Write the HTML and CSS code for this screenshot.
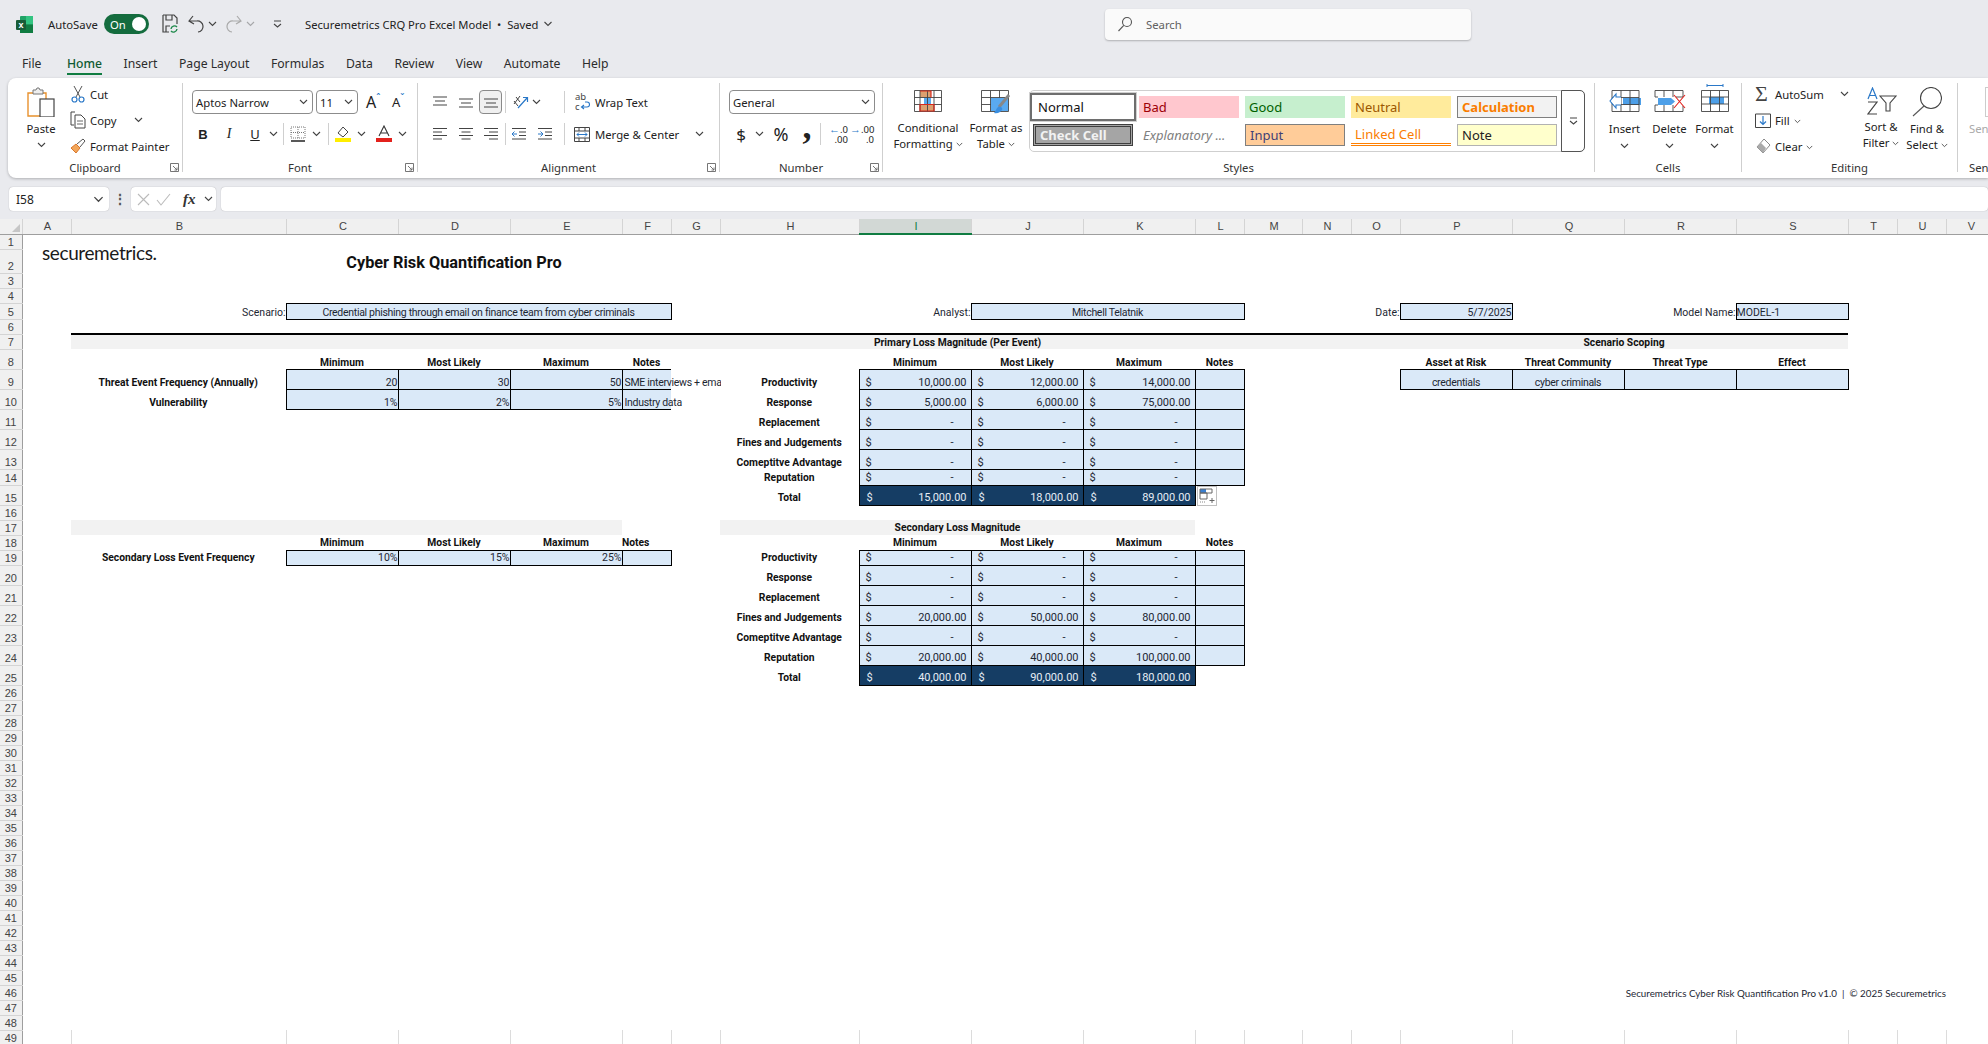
FILE: index.html
```html
<!DOCTYPE html>
<html lang="en">
<head>
  <meta charset="UTF-8" />
  <title>Securemetrics CRQ Pro Excel Model</title>
  <link rel="stylesheet" href="styles.css">
</head>
<body>
  <svg class="sprite">
    <symbol id="chev" viewBox="0 0 9 6"><path d="M1 1l3.5 3.5L8 1" fill="none" stroke="#444" stroke-width="1.1"/></symbol>
    <symbol id="launch" viewBox="0 0 9 9"><path d="M.5 8.5V.5h8v8zM3 3l4 4M7 4.5V7H4.5" fill="none" stroke="#666" stroke-width=".9"/></symbol>
    <symbol id="lines-l" viewBox="0 0 16 14"><path d="M1 1.5h14M1 5h9M1 8.5h14M1 12h9" stroke="#444" stroke-width="1.1"/></symbol>
    <symbol id="lines-c" viewBox="0 0 16 14"><path d="M1 1.5h14M3.5 5h9M1 8.5h14M3.5 12h9" stroke="#444" stroke-width="1.1"/></symbol>
    <symbol id="lines-r" viewBox="0 0 16 14"><path d="M1 1.5h14M6 5h9M1 8.5h14M6 12h9" stroke="#444" stroke-width="1.1"/></symbol>
  </svg>

  <header class="titlebar">
    <svg class="xl-logo" width="17" height="17" viewBox="0 0 17 17">
      <rect x="4" y="0" width="13" height="17" rx="1" fill="#21a366"/>
      <rect x="10" y="0" width="7" height="8.5" fill="#33c481"/>
      <rect x="4" y="8.5" width="13" height="8.5" fill="#107c41"/>
      <rect x="0" y="4" width="10" height="10" rx="1" fill="#185c37"/>
      <text x="5" y="12" class="xl-x">x</text>
    </svg>
    <span class="autosave">AutoSave</span>
    <span class="toggle"><span>On</span><i></i></span>
    <svg class="save-ic" width="16" height="20" viewBox="0 0 16 20">
      <path d="M1 1h11l3 3v6M7 18H1V1M4 1v5h6V1M4 18v-6h4" fill="none" stroke="#444" stroke-width="1.2"/>
      <path d="M9 15a3.5 3.5 0 0 1 6-2M15 15a3.5 3.5 0 0 1-6 2" fill="none" stroke="#1f8a4c" stroke-width="1.4"/>
    </svg>
    <svg class="undo" width="16" height="18" viewBox="0 0 16 18"><path d="M5 1L1 6l5 3M1.500 6H9a5.500 5.500 0 0 1 1 11" fill="none" stroke="#444" stroke-width="1.2"/></svg>
    <svg class="tchev" width="9" height="6"><use href="#chev"/></svg>
    <svg class="redo" width="16" height="18" viewBox="0 0 16 18"><path d="M11 1l4 5-5 3M14.500 6H7a5.500 5.500 0 0 0-1 11" fill="none" stroke="#aaa" stroke-width="1.2"/></svg>
    <svg class="tchev dim" width="9" height="6"><use href="#chev"/></svg>
    <svg class="qat" width="9" height="8" viewBox="0 0 9 8"><path d="M1 1h7M1 4l3.5 3L8 4" fill="none" stroke="#444" stroke-width="1.1"/></svg>
    <span class="docname">Securemetrics CRQ Pro Excel Model &nbsp;•&nbsp; Saved</span>
    <svg class="docchev" width="10" height="6"><use href="#chev"/></svg>
    <div class="search">
      <svg width="16" height="16" viewBox="0 0 16 16"><circle cx="10" cy="6" r="4.5" fill="none" stroke="#555" stroke-width="1.1"/><path d="M6.800 9.400L1.500 15" stroke="#555" stroke-width="1.1"/></svg>
      <span>Search</span>
    </div>
  </header>

  <nav class="tabs">
    <a class="file">File</a><a class="active">Home</a><a>Insert</a><a>Page Layout</a><a>Formulas</a><a>Data</a><a>Review</a><a>View</a><a>Automate</a><a>Help</a>
  </nav>

  <section class="ribbon">
    <!-- Clipboard -->
    <div class="group g-clip">
      <div class="g-body">
        <div class="paste">
          <svg width="28" height="30" viewBox="0 0 28 30">
            <path d="M1 6h18v23H1z" fill="#fff" stroke="#e8912d" stroke-width="1.4"/>
            <path d="M6 6V3h3l1-2 2 0 1 2h3v4H6z" fill="#eee" stroke="#777"/>
            <rect x="13" y="12" width="14" height="18" fill="#fff" stroke="#444" stroke-width="1.2"/>
          </svg>
          <span>Paste</span>
          <svg class="big-chev" width="9" height="6"><use href="#chev"/></svg>
        </div>
        <div class="small-col">
          <div class="small-row"><svg width="14" height="18" viewBox="0 0 14 18"><path d="M3 1l6 11M11 1L5 12" stroke="#555" fill="none"/><circle cx="3.5" cy="14.5" r="2.5" fill="none" stroke="#2a78c8" stroke-width="1.2"/><circle cx="10.5" cy="14.5" r="2.5" fill="none" stroke="#2a78c8" stroke-width="1.2"/></svg><span>Cut</span></div>
          <div class="small-row"><svg width="16" height="18" viewBox="0 0 16 18"><path d="M5 1H1v13h3M5 4h6l4 4v9H5z" fill="none" stroke="#444"/><path d="M7 10h6M7 13h6" stroke="#666"/></svg><span>Copy</span><svg class="copy-chev" width="9" height="6"><use href="#chev"/></svg></div>
          <div class="small-row"><svg width="16" height="16" viewBox="0 0 16 16"><path d="M1 10l5-4 4 4-4 5z" fill="#f2a65a" stroke="#d9762a"/><path d="M7 6l6-5 2 2-5 6" fill="#fff" stroke="#555"/></svg><span>Format Painter</span></div>
        </div>
      </div>
      <div class="g-label">Clipboard</div>
      <svg class="launcher" width="9" height="9"><use href="#launch"/></svg>
    </div>

    <!-- Font -->
    <div class="group g-font">
      <div class="g-body g-col">
        <div class="tool-row first">
          <div class="select font-name"><span>Aptos Narrow</span><svg width="9" height="6"><use href="#chev"/></svg></div>
          <div class="select font-size"><span>11</span><svg width="9" height="6"><use href="#chev"/></svg></div>
          <span class="grow-a">A<sup>ˆ</sup></span>
          <span class="shrink-a">A<sup>ˇ</sup></span>
        </div>
        <div class="tool-row">
          <span class="ib b">B</span><span class="ib i">I</span><span class="ib u">U</span>
          <svg class="cv" width="9" height="6"><use href="#chev"/></svg>
          <i class="vsep ml5"></i>
          <svg class="ml6" width="16" height="16" viewBox="0 0 16 16"><path d="M1 1h14v11H1zM8 1v11M1 6.500h14" fill="none" stroke="#777" stroke-dasharray="1 1"/><path d="M1 15h14" stroke="#222" stroke-width="1.4"/></svg>
          <svg class="cv ml6" width="9" height="6"><use href="#chev"/></svg>
          <i class="vsep ml7"></i>
          <svg class="ml6" width="16" height="18" viewBox="0 0 16 18"><path d="M3 8l5-6 5 5-5 5z" fill="#fff" stroke="#444"/><rect y="13" width="16" height="4" fill="#ffee00"/></svg>
          <svg class="cv ml6" width="9" height="6"><use href="#chev"/></svg>
          <svg class="ml10" width="16" height="18" viewBox="0 0 16 18"><path d="M3 11L8 1l5 10M5 8h6" fill="none" stroke="#333" stroke-width="1.1"/><rect y="13" width="16" height="4" fill="#e3211c"/></svg>
          <svg class="cv ml6" width="9" height="6"><use href="#chev"/></svg>
        </div>
      </div>
      <div class="g-label">Font</div>
      <svg class="launcher" width="9" height="9"><use href="#launch"/></svg>
    </div>

    <!-- Alignment -->
    <div class="group g-align">
      <div class="g-body g-col">
        <div class="tool-row first">
          <span class="ib ml9"><svg width="16" height="12" viewBox="0 0 16 12"><path d="M1 1h14M3 5h10M1 9h14" stroke="#444" stroke-width="1.1"/></svg></span>
          <span class="ib"><svg width="16" height="12" viewBox="0 0 16 12"><path d="M1 3h14M3 7h10M1 11h14" stroke="#444" stroke-width="1.1"/></svg></span>
          <span class="ib on"><svg width="16" height="12" viewBox="0 0 16 12"><path d="M1 3h14M3 7h10M1 11h14" stroke="#444" stroke-width="1.1"/></svg></span>
          <i class="vsep ml3"></i>
          <span class="ib ml3 w22"><svg width="17" height="16" viewBox="0 0 17 16"><path d="M2 10L8 2M4 3l4 5M2 7l4 5" stroke="#444" fill="none"/><path d="M6 14L15 4M11 3.500h4.500V8" stroke="#2a78c8" fill="none" stroke-width="1.2"/></svg></span>
          <svg class="cv" width="9" height="6"><use href="#chev"/></svg>
          <i class="vsep ml23"></i>
          <svg class="ml9" width="17" height="22" viewBox="0 0 17 22">
            <text x="1" y="9" class="wrap-t">ab</text><text x="1" y="19" class="wrap-t">c</text>
            <path d="M8 16h5a2.500 2.500 0 0 0 0-5h-2M10 14l-2.500 2 2.500 2" fill="none" stroke="#2a78c8" stroke-width="1.1"/>
          </svg>
          <span class="tool-text ml4">Wrap Text</span>
        </div>
        <div class="tool-row">
          <span class="ib ml9"><svg width="16" height="14"><use href="#lines-l"/></svg></span>
          <span class="ib"><svg width="16" height="14"><use href="#lines-c"/></svg></span>
          <span class="ib w24"><svg width="16" height="14"><use href="#lines-r"/></svg></span>
          <i class="vsep ml2"></i>
          <span class="ib"><svg width="16" height="14" viewBox="0 0 16 14"><path d="M1 1.500h14M8 5h7M8 8.500h7M1 12h14" stroke="#444"/><path d="M6 7H1M3.500 4.500L1 7l2.500 2.500" stroke="#2a78c8" fill="none"/></svg></span>
          <span class="ib"><svg width="16" height="14" viewBox="0 0 16 14"><path d="M1 1.500h14M8 5h7M8 8.500h7M1 12h14" stroke="#444"/><path d="M1 7h5M3.500 4.500L6 7 3.500 9.500" stroke="#2a78c8" fill="none"/></svg></span>
          <i class="vsep ml6"></i>
          <svg class="ml9" width="16" height="15" viewBox="0 0 16 15"><path d="M.5.500h15v14H.5zM.5 4h15M.5 11h15M5 .500V4M11 .500V4M5 11v3.500M11 11v3.500" fill="none" stroke="#444"/><path d="M3 7.500h10M5 5.500l-2 2 2 2M11 5.500l2 2-2 2" fill="none" stroke="#2a78c8"/></svg>
          <span class="tool-text ml5">Merge &amp; Center</span>
          <svg class="cv ml16" width="9" height="6"><use href="#chev"/></svg>
        </div>
      </div>
      <div class="g-label">Alignment</div>
      <svg class="launcher" width="9" height="9"><use href="#launch"/></svg>
    </div>

    <!-- Number -->
    <div class="group g-num">
      <div class="g-body g-col">
        <div class="tool-row first">
          <div class="select num-format"><span>General</span><svg width="9" height="6"><use href="#chev"/></svg></div>
        </div>
        <div class="tool-row">
          <span class="ib sym ml8">$</span>
          <svg class="cv" width="9" height="6"><use href="#chev"/></svg>
          <span class="ib sym pct ml4">%</span>
          <span class="ib sym comma">,</span>
          <i class="vsep"></i>
          <span class="ib dec ml3"><b>←</b>.0<br>.00</span>
          <span class="ib dec"><b>→</b>.00<br>.0</span>
        </div>
      </div>
      <div class="g-label">Number</div>
      <svg class="launcher" width="9" height="9"><use href="#launch"/></svg>
    </div>

    <!-- Styles -->
    <div class="group g-styles">
      <div class="g-body">
        <div class="big-btn w78 ml6">
          <svg width="28" height="22" viewBox="0 0 28 22">
            <rect x="6" y="1" width="11" height="6.500" fill="#dca070"/><rect x="10" y="8" width="7" height="6" fill="#5aaaf0"/><rect x="6" y="14.500" width="14" height="6.500" fill="#dca070"/>
            <path d="M.5.500h27v21H.5zM6 .500v21M13.500.500v21M20 .500v21M.5 7.500h27M.5 14.500h27" fill="none" stroke="#444" stroke-width=".9"/>
            <path d="M6 1h11v6.500H17M6 14.500h14V21H6z" fill="none" stroke="#d8281c" stroke-width="1.2"/>
          </svg>
          <span class="lbl">Conditional<br>Formatting <svg width="7" height="5"><use href="#chev"/></svg></span>
        </div>
        <div class="big-btn w58">
          <svg width="30" height="24" viewBox="0 0 30 24">
            <path d="M.5.500h27v21H.5zM9.500.500v21M18.500.500v21M.5 7.500h27M.5 14.500h27" fill="none" stroke="#444" stroke-width=".9"/>
            <rect x="10" y="8" width="17" height="13" fill="#5aaaf0"/>
            <path d="M28 5L18 17" stroke="#888" stroke-width="3"/><path d="M15 20q2-5 5-3t-1 5q-3 2-6 1" fill="#3a8ee0"/>
          </svg>
          <span class="lbl tight">Format as<br>Table <svg width="7" height="5"><use href="#chev"/></svg></span>
        </div>
        <div class="gallery">
          <div class="style-grid">
            <span class="st st-normal">Normal</span>
            <span class="st st-bad">Bad</span>
            <span class="st st-good">Good</span>
            <span class="st st-neutral">Neutral</span>
            <span class="st st-calc">Calculation</span>
            <span class="st st-check">Check Cell</span>
            <span class="st st-expl">Explanatory ...</span>
            <span class="st st-input">Input</span>
            <span class="st st-linked">Linked Cell</span>
            <span class="st st-note">Note</span>
          </div>
          <div class="more"><svg width="9" height="8" viewBox="0 0 9 8"><path d="M1 1h7M1 4l3.5 3L8 4" fill="none" stroke="#444" stroke-width="1.1"/></svg></div>
        </div>
      </div>
      <div class="g-label">Styles</div>
    </div>

    <!-- Cells -->
    <div class="group g-cells">
      <div class="g-body">
        <div class="big-btn w45 pl7box">
          <svg width="32" height="22" viewBox="0 0 32 22">
            <rect x="14" y="8" width="18" height="7" fill="#4d9fe8"/>
            <path d="M3 .500h27v21H3zM12 .500v21M21 .500v21M3 7.500h27M3 14.500h27" fill="none" stroke="#444" stroke-width=".9"/>
            <path d="M12 7H7V4L1 11l6 7v-3h5" fill="#fff" stroke="#2a78c8" stroke-width="1.1"/>
          </svg>
          <span class="lbl low">Insert</span><svg class="big-chev" width="9" height="6"><use href="#chev"/></svg>
        </div>
        <div class="big-btn w45">
          <svg width="32" height="22" viewBox="0 0 32 22">
            <rect x="4" y="8" width="13" height="7" fill="#4d9fe8"/><path d="M17 8l4 3.500-4 3.500z" fill="#4d9fe8"/>
            <path d="M22 7h7V.500H1V7h3M4 15H1v6.500h28V16M10 .500V7M19 .500V7M10 15v6.500M19 15v6.500" fill="none" stroke="#444" stroke-width=".9"/>
            <path d="M20 5l11 13M31 5L20 18" stroke="#e3211c" stroke-width="1.1"/>
          </svg>
          <span class="lbl low">Delete</span><svg class="big-chev" width="9" height="6"><use href="#chev"/></svg>
        </div>
        <div class="big-btn w45 up">
          <svg width="28" height="28" viewBox="0 0 28 28">
            <path d="M6 1.500h16M6 0v3M22 0v3" stroke="#2a78c8" fill="none"/>
            <rect x="8" y="13" width="15" height="7" fill="#4d9fe8"/>
            <path d="M.5 6.500h27v21H.5zM9.500 6.500v21M18.500 6.500v21M.5 13h27M.5 20h27" fill="none" stroke="#444" stroke-width=".9"/>
          </svg>
          <span class="lbl low">Format</span><svg class="big-chev" width="9" height="6"><use href="#chev"/></svg>
        </div>
      </div>
      <div class="g-label">Cells</div>
    </div>

    <!-- Editing -->
    <div class="group g-edit">
      <div class="g-body">
        <div class="small-col edit-col">
          <div class="small-row"><span class="sigma">Σ</span><span>AutoSum</span><svg class="auto-chev" width="9" height="6"><use href="#chev"/></svg></div>
          <div class="small-row"><svg width="16" height="16" viewBox="0 0 16 16"><path d="M.5 2h15v13.500H.5z" fill="none" stroke="#444"/><path d="M8 4v8M5 9.500L8 12.500l3-3" fill="none" stroke="#2a78c8" stroke-width="1.2"/></svg><span>Fill <svg width="7" height="5"><use href="#chev"/></svg></span></div>
          <div class="small-row"><svg width="16" height="16" viewBox="0 0 16 16"><path d="M9 1l6 6-7 8-6-6z" fill="#fff" stroke="#888"/><path d="M2 9l4-4 5 5-3 5z" fill="#aaa"/></svg><span>Clear <svg width="7" height="5"><use href="#chev"/></svg></span></div>
        </div>
        <div class="big-btn w46">
          <svg width="31" height="28" viewBox="0 0 31 28">
            <path d="M2 12L6.500 1 11 12M3.500 8.500h6" fill="none" stroke="#2a78c8" stroke-width="1.2"/>
            <path d="M2 15h9L2 27h9" fill="none" stroke="#444" stroke-width="1.2"/>
            <path d="M14 9h16l-6 7v8h-4v-8z" fill="#fff" stroke="#444" stroke-width="1.1"/>
          </svg>
          <span class="lbl">Sort &amp;<br>Filter <svg width="7" height="5"><use href="#chev"/></svg></span>
        </div>
        <div class="big-btn w46">
          <svg width="30" height="30" viewBox="0 0 30 30">
            <circle cx="19" cy="11" r="10.500" fill="none" stroke="#444" stroke-width="1.1"/><path d="M12 19L1 29" stroke="#555" stroke-width="1.1"/>
          </svg>
          <span class="lbl">Find &amp;<br>Select <svg width="7" height="5"><use href="#chev"/></svg></span>
        </div>
      </div>
      <div class="g-label">Editing</div>
    </div>

    <!-- cut off at the window edge -->
    <div class="group g-sens">
      <div class="g-body">
        <div class="sens-btn"><i></i><span>Sen</span></div>
      </div>
      <div class="g-label left">Sen</div>
    </div>
  </section>

  <div class="formula-bar">
    <div class="name-box"><span>I58</span><svg width="11" height="7"><use href="#chev"/></svg></div>
    <span class="dots">⋮</span>
    <div class="fx-box">
      <svg width="13" height="13" viewBox="0 0 13 13"><path d="M1 1l11 11M12 1L1 12" stroke="#bbb" stroke-width="1.1"/></svg>
      <svg width="15" height="13" viewBox="0 0 15 13"><path d="M1 7l4 5 9-11" fill="none" stroke="#bbb" stroke-width="1.1"/></svg>
      <span class="fx">fx</span>
      <svg width="9" height="6"><use href="#chev"/></svg>
    </div>
    <div class="formula-input"></div>
  </div>

  <div class="sheet-wrap">
    <span class="logo">securemetrics.</span>
    <div class="paste-opts">
      <svg width="17" height="16" viewBox="0 0 17 16"><rect x="1" y="1" width="6" height="4" fill="#3a7fd0"/><path d="M1 1h12v4H1zM1 5h7v6H1z" fill="none" stroke="#666"/><path d="M1 14h6" stroke="#888" stroke-dasharray="1 1"/><path d="M13 10v5M10.500 12.500h5" stroke="#666"/></svg>
    </div>
    <table class="sheet">
      <colgroup>
        <col class="c-rh"><col class="c-s"><col class="c-b"><col class="c-m"><col class="c-m"><col class="c-m"><col class="c-s"><col class="c-s">
        <col class="c-h"><col class="c-m"><col class="c-m"><col class="c-m"><col class="c-s"><col class="c-mm"><col class="c-s"><col class="c-s">
        <col class="c-m"><col class="c-m"><col class="c-m"><col class="c-m"><col class="c-s"><col class="c-s"><col class="c-s">
      </colgroup>
      <thead>
        <tr class="colhead">
          <th class="corner"><i></i></th>
          <th>A</th><th>B</th><th>C</th><th>D</th><th>E</th><th>F</th><th>G</th><th>H</th>
          <th class="sel">I</th>
          <th>J</th><th>K</th><th>L</th><th>M</th><th>N</th><th>O</th><th>P</th><th>Q</th><th>R</th><th>S</th><th>T</th><th>U</th><th>V</th>
        </tr>
      </thead>
      <tbody>
        <tr class="r15"><th>1</th><td colspan="22"></td></tr>
        <tr class="r24"><th>2</th><td colspan="2"></td><td colspan="3" class="title">Cyber Risk Quantification Pro</td><td colspan="17"></td></tr>
        <tr class="r15"><th>3</th><td colspan="22"></td></tr>
        <tr class="r15"><th>4</th><td colspan="22"></td></tr>
        <tr class="r16 pb0">
          <th>5</th><td></td><td class="lab-r">Scenario:</td>
          <td colspan="4" class="box ctr">Credential phishing through email on finance team from cyber criminals</td>
          <td colspan="2"></td><td class="lab-r">Analyst:</td>
          <td colspan="3" class="box ctr">Mitchell Telatnik</td>
          <td colspan="2"></td><td class="lab-r">Date:</td>
          <td class="box rgt">5/7/2025</td><td></td><td class="lab-r">Model Name:</td>
          <td class="box lft">MODEL-1</td><td colspan="3"></td>
        </tr>
        <tr class="r15"><th>6</th><td></td><td colspan="18" class="rule"></td><td colspan="3"></td></tr>
        <tr class="r15 pb0">
          <th>7</th><td></td>
          <td colspan="6" class="band"></td>
          <td colspan="4" class="band hd">Primary Loss Magnitude (Per Event)</td>
          <td colspan="4" class="band"></td>
          <td colspan="4" class="band hd">Scenario Scoping</td>
          <td colspan="3"></td>
        </tr>
        <tr class="r20 pb0">
          <th>8</th><td colspan="2"></td>
          <td class="hd">Minimum</td><td class="hd">Most Likely</td><td class="hd">Maximum</td><td class="hd">Notes</td>
          <td colspan="2"></td>
          <td class="hd">Minimum</td><td class="hd">Most Likely</td><td class="hd">Maximum</td><td class="hd">Notes</td>
          <td colspan="3"></td>
          <td class="hd">Asset at Risk</td><td class="hd">Threat Community</td><td class="hd">Threat Type</td><td class="hd">Effect</td>
          <td colspan="3"></td>
        </tr>
        <tr class="r20 pb0">
          <th>9</th><td></td><td class="hd">Threat Event Frequency (Annually)</td>
          <td class="box rgt">20</td><td class="box rgt">30</td><td class="box rgt">50</td>
          <td class="box open"><span class="spill">SME interviews + email data</span></td>
          <td></td><td class="hd">Productivity</td>
          <td class="box"><div class="m"><span>$</span><span>10,000.00</span></div></td>
          <td class="box"><div class="m"><span>$</span><span>12,000.00</span></div></td>
          <td class="box"><div class="m"><span>$</span><span>14,000.00</span></div></td>
          <td class="box"></td><td colspan="3"></td>
          <td class="box ctr">credentials</td><td class="box ctr">cyber criminals</td><td class="box"></td><td class="box"></td>
          <td colspan="3"></td>
        </tr>
        <tr class="r20 pb0">
          <th>10</th><td></td><td class="hd">Vulnerability</td>
          <td class="box rgt">1%</td><td class="box rgt">2%</td><td class="box rgt">5%</td>
          <td class="box open"><span class="spill">Industry data</span></td>
          <td></td><td class="hd">Response</td>
          <td class="box"><div class="m"><span>$</span><span>5,000.00</span></div></td>
          <td class="box"><div class="m"><span>$</span><span>6,000.00</span></div></td>
          <td class="box"><div class="m"><span>$</span><span>75,000.00</span></div></td>
          <td class="box"></td><td colspan="10"></td>
        </tr>
        <tr class="r20 pb0">
          <th>11</th><td colspan="7"></td><td class="hd">Replacement</td>
          <td class="box"><div class="m"><span>$</span><span class="dash">-</span></div></td>
          <td class="box"><div class="m"><span>$</span><span class="dash">-</span></div></td>
          <td class="box"><div class="m"><span>$</span><span class="dash">-</span></div></td>
          <td class="box"></td><td colspan="10"></td>
        </tr>
        <tr class="r20 pb0">
          <th>12</th><td colspan="7"></td><td class="hd">Fines and Judgements</td>
          <td class="box"><div class="m"><span>$</span><span class="dash">-</span></div></td>
          <td class="box"><div class="m"><span>$</span><span class="dash">-</span></div></td>
          <td class="box"><div class="m"><span>$</span><span class="dash">-</span></div></td>
          <td class="box"></td><td colspan="10"></td>
        </tr>
        <tr class="r20 pb0">
          <th>13</th><td colspan="7"></td><td class="hd">Comeptitve Advantage</td>
          <td class="box"><div class="m"><span>$</span><span class="dash">-</span></div></td>
          <td class="box"><div class="m"><span>$</span><span class="dash">-</span></div></td>
          <td class="box"><div class="m"><span>$</span><span class="dash">-</span></div></td>
          <td class="box"></td><td colspan="10"></td>
        </tr>
        <tr class="r16">
          <th>14</th><td colspan="7"></td><td class="hd">Reputation</td>
          <td class="box"><div class="m"><span>$</span><span class="dash">-</span></div></td>
          <td class="box"><div class="m"><span>$</span><span class="dash">-</span></div></td>
          <td class="box"><div class="m"><span>$</span><span class="dash">-</span></div></td>
          <td class="box"></td><td colspan="10"></td>
        </tr>
        <tr class="r20">
          <th>15</th><td colspan="7"></td><td class="hd">Total</td>
          <td class="total"><div class="m"><span>$</span><span>15,000.00</span></div></td>
          <td class="total"><div class="m"><span>$</span><span>18,000.00</span></div></td>
          <td class="total"><div class="m"><span>$</span><span>89,000.00</span></div></td>
          <td colspan="11"></td>
        </tr>
        <tr class="r15"><th>16</th><td colspan="22"></td></tr>
        <tr class="r15">
          <th>17</th><td></td>
          <td colspan="4" class="band"></td><td colspan="2"></td>
          <td colspan="4" class="band hd">Secondary Loss Magnitude</td>
          <td colspan="11"></td>
        </tr>
        <tr class="r15">
          <th>18</th><td colspan="2"></td>
          <td class="hd">Minimum</td><td class="hd">Most Likely</td><td class="hd">Maximum</td><td class="hd notes-l">Notes</td>
          <td colspan="2"></td>
          <td class="hd">Minimum</td><td class="hd">Most Likely</td><td class="hd">Maximum</td><td class="hd">Notes</td>
          <td colspan="10"></td>
        </tr>
        <tr class="r15">
          <th>19</th><td></td><td class="hd">Secondary Loss Event Frequency</td>
          <td class="box rgt">10%</td><td class="box rgt">15%</td><td class="box rgt">25%</td><td class="box"></td>
          <td></td><td class="hd">Productivity</td>
          <td class="box"><div class="m"><span>$</span><span class="dash">-</span></div></td>
          <td class="box"><div class="m"><span>$</span><span class="dash">-</span></div></td>
          <td class="box"><div class="m"><span>$</span><span class="dash">-</span></div></td>
          <td class="box"></td><td colspan="10"></td>
        </tr>
        <tr class="r20">
          <th>20</th><td colspan="7"></td><td class="hd">Response</td>
          <td class="box"><div class="m"><span>$</span><span class="dash">-</span></div></td>
          <td class="box"><div class="m"><span>$</span><span class="dash">-</span></div></td>
          <td class="box"><div class="m"><span>$</span><span class="dash">-</span></div></td>
          <td class="box"></td><td colspan="10"></td>
        </tr>
        <tr class="r20">
          <th>21</th><td colspan="7"></td><td class="hd">Replacement</td>
          <td class="box"><div class="m"><span>$</span><span class="dash">-</span></div></td>
          <td class="box"><div class="m"><span>$</span><span class="dash">-</span></div></td>
          <td class="box"><div class="m"><span>$</span><span class="dash">-</span></div></td>
          <td class="box"></td><td colspan="10"></td>
        </tr>
        <tr class="r20">
          <th>22</th><td colspan="7"></td><td class="hd">Fines and Judgements</td>
          <td class="box"><div class="m"><span>$</span><span>20,000.00</span></div></td>
          <td class="box"><div class="m"><span>$</span><span>50,000.00</span></div></td>
          <td class="box"><div class="m"><span>$</span><span>80,000.00</span></div></td>
          <td class="box"></td><td colspan="10"></td>
        </tr>
        <tr class="r20">
          <th>23</th><td colspan="7"></td><td class="hd">Comeptitve Advantage</td>
          <td class="box"><div class="m"><span>$</span><span class="dash">-</span></div></td>
          <td class="box"><div class="m"><span>$</span><span class="dash">-</span></div></td>
          <td class="box"><div class="m"><span>$</span><span class="dash">-</span></div></td>
          <td class="box"></td><td colspan="10"></td>
        </tr>
        <tr class="r20">
          <th>24</th><td colspan="7"></td><td class="hd">Reputation</td>
          <td class="box"><div class="m"><span>$</span><span>20,000.00</span></div></td>
          <td class="box"><div class="m"><span>$</span><span>40,000.00</span></div></td>
          <td class="box"><div class="m"><span>$</span><span>100,000.00</span></div></td>
          <td class="box"></td><td colspan="10"></td>
        </tr>
        <tr class="r20">
          <th>25</th><td colspan="7"></td><td class="hd">Total</td>
          <td class="total"><div class="m"><span>$</span><span>40,000.00</span></div></td>
          <td class="total"><div class="m"><span>$</span><span>90,000.00</span></div></td>
          <td class="total"><div class="m"><span>$</span><span>180,000.00</span></div></td>
          <td colspan="11"></td>
        </tr>
        <tr class="r15"><th>26</th><td colspan="22"></td></tr>
        <tr class="r15"><th>27</th><td colspan="22"></td></tr>
        <tr class="r15"><th>28</th><td colspan="22"></td></tr>
        <tr class="r15"><th>29</th><td colspan="22"></td></tr>
        <tr class="r15"><th>30</th><td colspan="22"></td></tr>
        <tr class="r15"><th>31</th><td colspan="22"></td></tr>
        <tr class="r15"><th>32</th><td colspan="22"></td></tr>
        <tr class="r15"><th>33</th><td colspan="22"></td></tr>
        <tr class="r15"><th>34</th><td colspan="22"></td></tr>
        <tr class="r15"><th>35</th><td colspan="22"></td></tr>
        <tr class="r15"><th>36</th><td colspan="22"></td></tr>
        <tr class="r15"><th>37</th><td colspan="22"></td></tr>
        <tr class="r15"><th>38</th><td colspan="22"></td></tr>
        <tr class="r15"><th>39</th><td colspan="22"></td></tr>
        <tr class="r15"><th>40</th><td colspan="22"></td></tr>
        <tr class="r15"><th>41</th><td colspan="22"></td></tr>
        <tr class="r15"><th>42</th><td colspan="22"></td></tr>
        <tr class="r15"><th>43</th><td colspan="22"></td></tr>
        <tr class="r15"><th>44</th><td colspan="22"></td></tr>
        <tr class="r15"><th>45</th><td colspan="22"></td></tr>
        <tr class="r15"><th>46</th><td colspan="15"></td><td colspan="6" class="foot">Securemetrics Cyber Risk Quantification Pro v1.0 &nbsp;|&nbsp; © 2025 Securemetrics</td><td></td></tr>
        <tr class="r15"><th>47</th><td colspan="22"></td></tr>
        <tr class="r15"><th>48</th><td colspan="22"></td></tr>
        <tr class="r15 gridded"><th>49</th><td></td><td></td><td></td><td></td><td></td><td></td><td></td><td></td><td></td><td></td><td></td><td></td><td></td><td></td><td></td><td></td><td></td><td></td><td></td><td></td><td></td><td></td></tr>
      </tbody>
    </table>
  </div>
</body>
</html>
```

FILE: styles.css
```css
html, body {
  margin: 0;
  height: 1044px;
  overflow: hidden;
  background-color: #e9eaee;
  color: #222;
  font-family: "Noto Sans", Arial, sans-serif;
  font-size: 11.3px;
}
svg { display: block; flex: none; }
.sprite { position: absolute; width: 0; height: 0; }

/* title bar */
.titlebar {
  display: flex;
  align-items: center;
  height: 46px;
  padding: 2px 0 0 16px;
  box-sizing: border-box;
}
.xl-x { font: bold 9px "Liberation Sans", sans-serif; fill: #fff; text-anchor: middle; }
.autosave { margin-left: 15px; width: 49px; }
.toggle {
  display: flex;
  align-items: center;
  justify-content: space-between;
  margin-left: 7px;
  width: 45px;
  height: 20px;
  padding: 0 3px 0 6px;
  box-sizing: border-box;
  border-radius: 10px;
  background-color: #146c3e;
  color: #fff;
}
.toggle i { width: 14px; height: 14px; border-radius: 50%; background: #fff; }
.save-ic { margin-left: 13px; }
.undo { margin-left: 10px; }
.tchev { margin-left: 4px; }
.tchev.dim { opacity: .4; }
.redo { margin-left: 9px; }
.qat { margin-left: 18px; }
.docname { margin-left: 23px; white-space: nowrap; width: 238px; font-size: 11.2px; }
.search {
  display: flex;
  align-items: center;
  gap: 13px;
  margin-left: 552px;
  width: 366px;
  height: 31px;
  padding-left: 12px;
  box-sizing: border-box;
  background-color: #fafafa;
  border-radius: 4px;
  box-shadow: 0 1px 2px rgba(0, 0, 0, .25);
  color: #616161;
}

/* tabs */
.tabs {
  display: flex;
  gap: 21.5px;
  height: 32px;
  padding-left: 22px;
  font-size: 12.2px;
}
.tabs a { height: 27px; line-height: 36px; color: #2c2c2c; }
.tabs a.file { margin-right: 4px; }
.tabs a.active { border-bottom: 2px solid #107c41; font-weight: 500; color: #0f5a32; }

/* ribbon */
.ribbon {
  display: flex;
  margin-left: 8px;
  height: 100px;
  background-color: #fff;
  border-radius: 8px 0 0 8px;
  box-shadow: 0 1px 3px rgba(0, 0, 0, .25);
  overflow: hidden;
}
.group {
  position: relative;
  display: flex;
  flex-direction: column;
  flex: none;
  height: 89px;
  margin-top: 5px;
  box-sizing: border-box;
  border-right: 1px solid #cfcfcf;
}
.g-clip { width: 175px; }
.g-font { width: 235px; }
.g-align { width: 302px; }
.g-num { width: 163px; }
.g-styles { width: 712px; }
.g-cells { width: 147px; }
.g-edit { width: 216px; }
.g-sens { flex: 1; border-right: none; }
.g-body { display: flex; flex: none; height: 76px; }
.g-col { flex-direction: column; }
.g-label { height: 13px; line-height: 18px; text-align: center; color: #333; }
.g-label.left { text-align: left; padding-left: 11px; }
.launcher { position: absolute; right: 3px; bottom: 0; }

.paste {
  display: flex;
  flex-direction: column;
  align-items: center;
  width: 58px;
  padding: 4px 0 0 4px;
}
.paste span { margin-top: 4px; }
.big-chev { margin-top: 6px; }
.small-col { display: flex; flex-direction: column; margin-top: -2px; }
.small-row { display: flex; align-items: center; gap: 4px; height: 26px; white-space: nowrap; }
.small-row span svg { display: inline-block; vertical-align: 1px; margin-left: 1px; }
.copy-chev { margin-left: 14px; }
.g-clip .small-row svg:first-child { width: 16px; }

.tool-row { display: flex; align-items: center; height: 24px; }
.tool-row.first { margin: 7px 0 8px; }
.ib {
  display: flex;
  align-items: center;
  justify-content: center;
  flex: none;
  width: 26px;
  height: 24px;
  box-sizing: border-box;
}
.ib.on { width: 23px; background-color: #f0f0f0; border: 1px solid #8a8a8a; border-radius: 4px; }
.w22 { width: 22px; }
.w24 { width: 24px; }
.cv { margin-left: 1px; }
.vsep { width: 1px; height: 22px; background-color: #cfcfcf; flex: none; }
.ml2 { margin-left: 2px; }
.ml3 { margin-left: 3px; }
.ml4 { margin-left: 4px; }
.ml5 { margin-left: 5px; }
.ml6 { margin-left: 6px; }
.ml7 { margin-left: 7px; }
.ml8 { margin-left: 8px; }
.ml9 { margin-left: 9px; }
.ml10 { margin-left: 10px; }
.ml16 { margin-left: 16px; }
.ml23 { margin-left: 23px; }

.select {
  display: flex;
  align-items: center;
  justify-content: space-between;
  height: 24px;
  padding: 0 4px 0 3px;
  box-sizing: border-box;
  border: 1px solid #8c8c8c;
  border-radius: 4px;
}
.font-name { width: 121px; margin-left: 9px; }
.font-size { width: 42px; margin-left: 3px; }
.num-format { width: 146px; margin-left: 9px; }
.grow-a, .shrink-a { line-height: 1; }
.grow-a { margin-left: 8px; width: 26px; font-size: 16px; }
.shrink-a { width: 24px; font-size: 13px; }
.grow-a sup, .shrink-a sup { font-size: 10px; color: #2a78c8; line-height: 0; }
.g-font .tool-row .b { font-weight: 700; margin-left: 7px; font-family: "Liberation Sans", sans-serif; font-size: 13px; }
.g-font .tool-row .i { font-style: italic; font-family: "Liberation Serif", serif; font-size: 14px; }
.g-font .tool-row .u { text-decoration: underline; font-size: 13px; }
.wrap-t { font: 9.5px "Noto Sans", sans-serif; fill: #444; }
.tool-text { white-space: nowrap; }
.sym { font-size: 17px; }
.pct { font-size: 18px; }
.comma { font-weight: 700; font-family: "Liberation Serif", serif; font-size: 36px; line-height: 24px; padding-bottom: 16px; }
.dec { font-size: 9.5px; line-height: 10px; display: block; text-align: right; padding: 2px 2px 0 0; white-space: nowrap; }
.dec b { color: #2a78c8; font-weight: 400; font-size: 11px; }

.big-btn {
  display: flex;
  flex-direction: column;
  align-items: center;
  flex: none;
  padding-top: 7px;
  box-sizing: border-box;
}
.big-btn.up { padding-top: 1px; }
.big-btn .lbl { margin-top: 8px; text-align: center; line-height: 16px; white-space: nowrap; }
.big-btn .lbl.tight { margin-top: 6px; }
.big-btn .lbl svg { display: inline-block; vertical-align: 1px; }
.big-btn .lbl.low { margin-top: 9px; }
.big-btn.w46 { padding-top: 4px; }
.big-btn.w46 .lbl { margin-top: 4px; }
.w78 { width: 78px; }
.w58 { width: 58px; }
.w45 { width: 45px; }
.w46 { width: 46px; }
.pl7box { margin-left: 7px; }

.gallery {
  display: flex;
  margin: 7px 0 0 4px;
  width: 556px;
  height: 62px;
  box-sizing: border-box;
  border: 1px solid #cfcfcf;
  border-radius: 5px;
}
.style-grid {
  display: grid;
  grid-template-columns: repeat(5, 100px);
  grid-template-rows: 22px 22px;
  gap: 6px;
  padding: 5px 0 0 3px;
  font-size: 13px;
}
.st {
  display: flex;
  align-items: center;
  padding-left: 4px;
  box-sizing: border-box;
  white-space: nowrap;
}
.st-normal { margin: -3px; padding-left: 6px; background: #fff; border: 2px solid #6e6e6e; outline: 1px solid #d0d0d0; color: #111; }
.st-bad { background: #ffc7ce; color: #9c0006; }
.st-good { background: #c6efce; color: #006100; }
.st-neutral { background: #ffeb9c; color: #9c5700; }
.st-calc { background: #f2f2f2; color: #fa7d00; border: 1px solid #7f7f7f; font-weight: 700; }
.st-check { background: #a5a5a5; color: #f2f2f2; border: 3px double #3f3f3f; font-weight: 700; }
.st-expl { color: #7f7f7f; font-style: italic; }
.st-input { background: #ffcc99; color: #3f3f76; border: 1px solid #7f7f7f; }
.st-linked { color: #fa7d00; border-bottom: 3px double #ff8001; }
.st-note { background: #ffffcc; color: #222; border: 1px solid #b2b2b2; }
.more {
  display: flex;
  align-items: center;
  justify-content: center;
  margin: -1px -1px -1px 4px;
  flex: 1;
  border: 1px solid #555;
  border-radius: 0 5px 5px 0;
}

.edit-col { width: 103px; padding-left: 13px; }
.sigma { font-size: 22px; line-height: 22px; width: 16px; color: #444; font-family: "Liberation Serif", serif; }
.auto-chev { margin-left: 12px; }
.sens-btn { display: flex; flex-direction: column; padding: 4px 0 0 11px; color: #aaa; }
.sens-btn i { margin-left: 16px; width: 20px; height: 30px; border: 1px solid #ccc; box-sizing: border-box; }
.sens-btn span { margin-top: 4px; }

/* formula bar */
.formula-bar { display: flex; align-items: stretch; margin: 9px 0 8px 9px; height: 24px; }
.name-box, .fx-box, .formula-input {
  display: flex;
  align-items: center;
  box-sizing: border-box;
  background-color: #fff;
  border-radius: 4px;
  box-shadow: 0 0 1px rgba(0, 0, 0, .35);
}
.name-box { justify-content: space-between; width: 100px; padding: 0 5px 0 7px; font-size: 12px; }
.dots { width: 22px; text-align: center; font-size: 14px; line-height: 24px; font-weight: 700; color: #555; }
.fx-box { width: 85px; gap: 6px; padding-left: 6px; }
.fx { font: italic 700 15px "Liberation Serif", serif; color: #333; width: 15px; margin-left: 6px; }
.formula-input { flex: 1; margin-left: 5px; }

/* sheet */
.sheet-wrap {
  position: relative;
  width: 1988px;
  height: 825px;
  overflow: hidden;
  background-color: #fff;
}
.sheet {
  table-layout: fixed;
  width: 1995px;
  border-collapse: collapse;
  font-family: Roboto, "Liberation Sans", sans-serif;
  font-size: 10.5px;
  color: #1d2733;
}
.c-rh { width: 22px; }
.c-s { width: 49px; }
.c-b { width: 215px; }
.c-m { width: 112px; }
.c-mm { width: 58px; }
.c-h { width: 139px; }
.sheet td, .sheet th { padding: 0; box-sizing: border-box; white-space: nowrap; }
.sheet td { vertical-align: bottom; line-height: 12px; padding-bottom: 1px; }
.sheet tr.pb0 td { padding-bottom: 0; }
.sheet thead th {
  height: 15px;
  padding-left: 2px;
  background-color: #f0f0f0;
  border-right: 1px solid #d4d4d4;
  border-bottom: 1px solid #9e9e9e;
  font: 11px/12px "Liberation Sans", sans-serif;
  color: #444;
}
.sheet tbody th {
  vertical-align: bottom;
  padding-bottom: 1px;
  background-color: #f0f0f0;
  border-right: 1px solid #9e9e9e;
  border-bottom: 1px solid #d4d4d4;
  font: 11px/12px "Liberation Sans", sans-serif;
  color: #444;
}
.sheet thead th.sel { background-color: #d2d8d5; color: #107c41; border-bottom: 2px solid #107c41; }
.corner { position: relative; }
.corner i {
  position: absolute;
  right: 2px;
  bottom: 2px;
  border-style: solid;
  border-width: 0 0 8px 8px;
  border-color: transparent transparent #c6c6c6 transparent;
}
.r15 td, .r15 th { height: 15px; }
.r16 td, .r16 th { height: 16px; }
.r20 td, .r20 th { height: 20px; }
.r24 td, .r24 th { height: 24px; }

.sheet td.title { text-align: center; font-size: 16.3px; font-weight: 700; line-height: 20px; padding-bottom: 0; color: #111; }
.lab-r { text-align: right; padding-right: 2px; }
.hd { text-align: center; font-weight: 700; color: #111; padding-left: 2px; font-size: 10.3px; }
.notes-l { text-align: left; padding-left: 3px; }
.box { background-color: #dae9f8; border: 1px solid #000; }
.box.open { border-right: none; padding-left: 2px; }
.ctr { text-align: center; padding-left: 2px; letter-spacing: -.3px; }
.rgt { text-align: right; padding-right: 2px; }
.lft { text-align: left; padding-left: 2px; }
.rule { border-bottom: 2px solid #000; }
.band { background-color: #f2f2f2; }
.spill { display: block; width: 96px; overflow: hidden; letter-spacing: -.3px; }
.m { display: flex; justify-content: space-between; padding: 0 4px 0 6px; font-size: 11px; }
.dash { padding-right: 13px; }
.total { background-color: #153d64; color: #e6edf5; border: 1px solid #000; }
.total .m { padding-left: 7px; }
.foot { text-align: right; font-family: Lato, sans-serif; font-size: 9.8px; }
.gridded td { border-left: 1px solid #dcdcdc; }

.logo {
  position: absolute;
  left: 42px;
  top: 22px;
  z-index: 1;
  font-family: Lato, sans-serif;
  font-size: 19px;
  letter-spacing: -.4px;
  color: #1a1a1a;
}
.paste-opts {
  position: absolute;
  left: 1197px;
  top: 267px;
  z-index: 1;
  display: flex;
  align-items: center;
  justify-content: center;
  width: 20px;
  height: 20px;
  box-sizing: border-box;
  background: #fff;
  border: 1px solid #c0c0c0;
}
```
